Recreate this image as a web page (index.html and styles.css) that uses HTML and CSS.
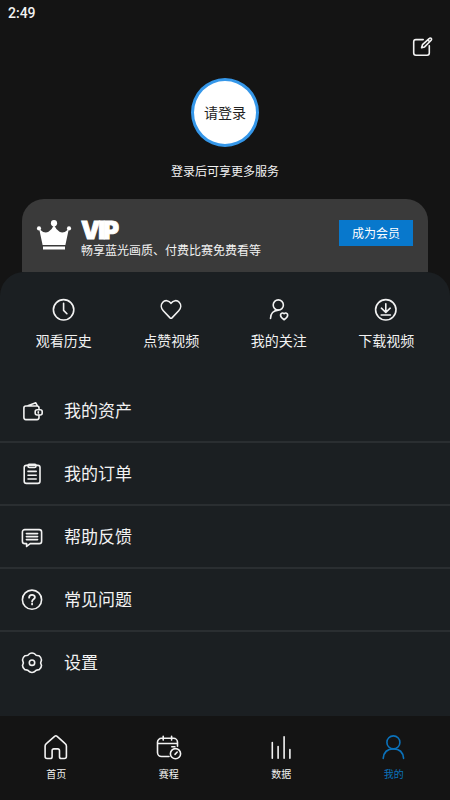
FILE: index.html
```html
<!DOCTYPE html>
<html lang="zh-CN">
<head>
<meta charset="utf-8">
<meta name="viewport" content="width=device-width, initial-scale=1">
<title>我的</title>
<link rel="stylesheet" href="styles.css">
</head>
<body>
<div class="app">
  <header class="status">2:49</header>
  <div class="toolbar">
    <svg class="icon" width="24" height="24" viewBox="0 0 24 24"><path d="M13.2 4.6H5.9a2.2 2.2 0 0 0-2.2 2.2v11.3a2.2 2.2 0 0 0 2.2 2.2h11.2a2.2 2.2 0 0 0 2.2-2.2v-7.4"/><path d="m11.6 12.7.9-3.1 6.9-6.2a1.25 1.25 0 0 1 1.8 1.8l-6.6 6.7ZM17.8 4.9l1.8 1.8"/></svg>
  </div>
  <section class="profile">
    <button class="avatar">请登录</button>
    <p class="hint">登录后可享更多服务</p>
  </section>
  <section class="vip">
    <svg class="crown" width="36" height="32" viewBox="0 0 36 32"><circle cx="18" cy="3.2" r="3.1"/><circle cx="3" cy="8.4" r="2.1"/><circle cx="33" cy="8.4" r="2.1"/><path d="M3.2 9Q8.4 14.1 12.5 11.7 16.1 9.6 18 5.1q1.9 4.5 5.5 6.6 4.1 2.4 9.3-2.7L29.4 25H6.6ZM7 26.4h22v3.2H7Z"/></svg>
    <div class="vip-copy">
      <h1>VIP</h1>
      <p>畅享蓝光画质、付费比赛免费看等</p>
    </div>
    <button class="join">成为会员</button>
  </section>
  <main class="panel">
    <div class="actions">
      <div class="action">
        <svg class="icon" width="24" height="24" viewBox="0 0 24 24"><circle cx="11.6" cy="11.8" r="10.2"/><path d="M11.6 5.2v7.2l3.3 3.3"/></svg>
        <span>观看历史</span>
      </div>
      <div class="action">
        <svg class="icon" width="24" height="24" viewBox="0 0 24 24"><path d="M12 5.3C9.8 2.2 6 1.8 3.8 4.2 1.4 6.8 2 10.3 4.3 12.7L10.8 19.6q1.2 1.2 2.4 0l6.5-6.9c2.3-2.4 2.9-5.9.5-8.5C18 1.8 14.2 2.2 12 5.3Z"/></svg>
        <span>点赞视频</span>
      </div>
      <div class="action">
        <svg class="icon" width="24" height="24" viewBox="0 0 24 24"><circle cx="11.3" cy="7" r="5.1"/><path d="M3.5 20.5c0-4.8 3-8.1 7.8-8.4"/><path d="M17.1 15.6c-1.5-1.3-3.6-.4-3.6 1.5 0 2.2 2 3.7 3.6 4.7 1.6-1 3.6-2.5 3.6-4.7 0-1.9-2.1-2.8-3.6-1.5Z"/></svg>
        <span>我的关注</span>
      </div>
      <div class="action">
        <svg class="icon" width="24" height="24" viewBox="0 0 24 24"><circle cx="11.8" cy="11.8" r="10.2"/><path d="M11.8 5.8v8.5M7.4 10.2l4.4 4.2 4.4-4.2M7.2 17h9.2"/></svg>
        <span>下载视频</span>
      </div>
    </div>
    <nav class="menu">
      <a class="row">
        <svg class="icon" width="24" height="24" viewBox="0 0 24 24"><path d="M19 9.6V9a2 2 0 0 0-2-2H5.9a2 2 0 0 0-2 2v9.6a2 2 0 0 0 2 2H17a2 2 0 0 0 2-2v-2.2M7.8 6.8l8-3 1.6 3"/><rect x="15.2" y="10.8" width="7" height="5.2" rx="2"/><path d="M18.3 12.8v1.3"/></svg>
        <span>我的资产</span>
      </a>
      <a class="row">
        <svg class="icon" width="24" height="24" viewBox="0 0 24 24"><rect x="4.2" y="3.4" width="15.8" height="18" rx="2.2"/><path d="M8 3.4v.7a1.4 1.4 0 0 0 1.4 1.4h5.2A1.4 1.4 0 0 0 16 4.1v-.7a1 1 0 0 0-1-1H9a1 1 0 0 0-1 1ZM8 9.4h8.2M8 13.2h8.2M8 17h8.2"/></svg>
        <span>我的订单</span>
      </a>
      <a class="row">
        <svg class="icon" width="24" height="24" viewBox="0 0 24 24"><path d="M4.8 4.6h14.4a2.4 2.4 0 0 1 2.4 2.4v9.2a2.4 2.4 0 0 1-2.4 2.4h-9L6.6 21.4v-2.8H4.8a2.4 2.4 0 0 1-2.4-2.4V7a2.4 2.4 0 0 1 2.4-2.4ZM6.4 8.6h11.2M6.4 11.6h11.2M6.4 14.6h11.2"/></svg>
        <span>帮助反馈</span>
      </a>
      <a class="row">
        <svg class="icon" width="24" height="24" viewBox="0 0 24 24"><circle cx="12" cy="11.7" r="9.6"/><path class="bold" d="M9.1 9.7c0-3.7 5.8-3.7 5.8-.4 0 2.1-2.8 2-2.8 4.3M12.1 15.6v.8"/></svg>
        <span>常见问题</span>
      </a>
      <a class="row">
        <svg class="icon" width="24" height="24" viewBox="0 0 24 24"><path d="M9.6 2.6Q12 1.3 14.4 2.6 15.9 4.9 19.2 4.8 21.4 6.4 21.5 9 19.9 11.7 21.5 14.4 21.4 17 19.2 18.6 15.9 18.5 14.4 20.8 12 22.1 9.6 20.8 8.1 18.5 4.8 18.6 2.6 17 2.5 14.4 4.1 11.7 2.5 9 2.6 6.4 4.8 4.8 8.1 4.9 9.6 2.6Z"/><circle cx="12" cy="11.7" r="2.7"/></svg>
        <span>设置</span>
      </a>
    </nav>
  </main>
  <footer class="tabs">
    <a class="tab">
      <svg class="icon" width="28" height="28" viewBox="0 0 28 28"><path d="m12.6 2.3-8 7q-1.5 1.2-1.5 2.8v10.4c0 1.2.8 2 2 2h3.2c1.2 0 1.8-.7 1.8-1.8v-6c0-1.1.7-1.8 1.8-1.8h3.8c1.1 0 1.8.7 1.8 1.8v6c0 1.1.6 1.8 1.8 1.8h3.1c1.2 0 2-.8 2-2V12.1q0-1.6-1.5-2.8l-7.8-7q-1.2-1-2.5 0Z"/></svg>
      <span>首页</span>
    </a>
    <a class="tab">
      <svg class="icon" width="28" height="28" viewBox="0 0 28 28"><path d="M14 22.5H6.5a4 4 0 0 1-4-4V8.3a4 4 0 0 1 4-4h12a4 4 0 0 1 4 4v4M2.5 9.5h20M8.2 2.2v3.9M16.6 2.2v3.9M16.8 12.8h3.1"/><circle cx="20.5" cy="19.7" r="5.1"/><path d="m20 20.4 2.2-2.4"/></svg>
      <span>赛程</span>
    </a>
    <a class="tab">
      <svg class="icon" width="28" height="28" viewBox="0 0 28 28"><path d="M5.3 8.6v15.6M11.1 12.5v11.7M17.1 2.8v21.4M22.9 15.5v8.7"/></svg>
      <span>数据</span>
    </a>
    <a class="tab active">
      <svg class="icon" width="28" height="28" viewBox="0 0 28 28"><circle cx="13.4" cy="8.4" r="6.5"/><path d="M3.2 24.4C3.8 18 8 14.9 13.4 14.9S23 18 23.6 24.4"/></svg>
      <span>我的</span>
    </a>
  </footer>
</div>
</body>
</html>
```

FILE: styles.css
```css
* {
  box-sizing: border-box;
}

body {
  margin: 0;
  background: #141414;
  color: #f2f2f2;
  font-family: "Noto Sans CJK SC", sans-serif;
}

h1,
p {
  margin: 0;
}

button {
  border: 0;
  padding: 0;
  font-family: inherit;
}

.app {
  display: flex;
  flex-direction: column;
  width: 450px;
  height: 800px;
  overflow: hidden;
}

.icon {
  display: block;
  flex: none;
  fill: none;
  stroke: currentColor;
  stroke-width: 1.6;
  stroke-linecap: round;
  stroke-linejoin: round;
}

.icon .bold {
  stroke-width: 1.8;
}

.status {
  height: 26px;
  padding-left: 8px;
  font: 500 14px/26px Roboto, sans-serif;
}

.toolbar {
  display: flex;
  justify-content: flex-end;
  height: 52px;
  padding: 9px 16px 0 0;
}

.profile {
  display: flex;
  flex-direction: column;
  align-items: center;
  height: 121px;
}

.avatar {
  width: 68px;
  height: 69px;
  padding-bottom: 2px;
  border: 3px solid #3597e9;
  border-radius: 50%;
  background: #fff;
  color: #222;
  font-size: 14px;
  line-height: 20px;
}

.hint {
  margin-top: 15px;
  font-size: 12px;
  line-height: 18px;
}

.vip {
  display: flex;
  align-items: flex-start;
  height: 73px;
  margin: 0 22px;
  padding: 21px 15px 0 14px;
  border-radius: 22px 22px 0 0;
  background: #3a3a3a;
}

.crown {
  flex: none;
  fill: #fff;
}

.vip-copy {
  flex: 1;
  margin-left: 9px;
}

.vip-copy h1 {
  color: #fff;
  font: 900 24px/21px Inter, sans-serif;
  letter-spacing: -1.9px;
  -webkit-text-stroke: 0.9px #fff;
}

.vip-copy p {
  font-size: 12px;
  line-height: 18px;
}

.join {
  width: 74px;
  height: 26px;
  background: #0878cc;
  color: #fff;
  font-size: 12px;
  line-height: 26px;
}

.panel {
  height: 444px;
  border-radius: 24px 24px 0 0;
  background: #1b1f22;
}

.actions {
  display: grid;
  grid-template-columns: repeat(4, 1fr);
  height: 108px;
  padding: 26px 10px 0;
}

.action {
  display: flex;
  flex-direction: column;
  align-items: center;
  gap: 8px;
  font-size: 14px;
  line-height: 20px;
}

.row {
  display: flex;
  align-items: center;
  gap: 20px;
  height: 63px;
  padding-left: 20px;
  border-bottom: 2px solid #2a2e31;
  font-size: 17px;
  line-height: 24px;
}

.row span {
  padding-bottom: 1px;
}

.row:last-child {
  border-bottom-color: transparent;
}

.tabs {
  display: grid;
  grid-template-columns: repeat(4, 1fr);
  height: 84px;
  padding-top: 18px;
  background: #141414;
}

.tab {
  display: flex;
  flex-direction: column;
  align-items: center;
  gap: 4px;
  font-size: 10px;
  line-height: 15px;
}

.tab.active {
  color: #0b72bb;
}
```
